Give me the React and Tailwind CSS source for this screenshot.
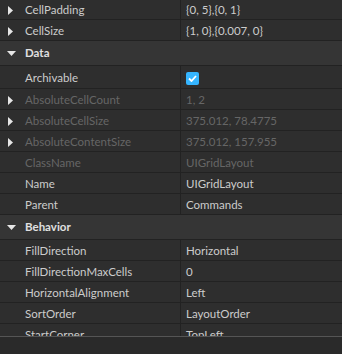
import React from 'react';

const Arrow = ({ open }) =>
  open ? (
    <svg width="9" height="5" viewBox="0 0 9 5" className="fill-[#e6e6e6]">
      <path d="M0 0H9L4.5 5Z" />
    </svg>
  ) : (
    <svg width="5" height="9" viewBox="0 0 5 9" className="fill-[#e6e6e6]">
      <path d="M0 0L5 4.5L0 9Z" />
    </svg>
  );

const Check = () => (
  <div className="w-[13px] h-[13px] rounded-[2px] bg-[#35b5ff] flex items-center justify-center">
    <svg width="9" height="7" viewBox="0 0 9 7" fill="none" stroke="white" strokeWidth="1.8">
      <path d="M1 3.5L3.5 6L8 1" />
    </svg>
  </div>
);

const Row = ({ name, value, arrow, disabled, check, h = 'h-[20px]' }) => (
  <div className={`flex ${h} border-b border-[#222222] box-content`}>
    <div className="w-[180px] flex items-center shrink-0 pt-[2px]">
      <div className="w-[25px] flex items-center pl-[8px]">{arrow ? <Arrow /> : null}</div>
      <span className={disabled ? 'text-[#666666]' : 'text-[#cccccc]'}>{name}</span>
    </div>
    <div className="border-l border-[#222222] flex items-center pl-[5px] flex-1 pt-[2px]">
      {check ? <Check /> : <span className={disabled ? 'text-[#666666]' : 'text-[#cccccc]'}>{value}</span>}
    </div>
  </div>
);

const Header = ({ title }) => (
  <div className="flex items-center h-[24px] bg-[#353535] border-b border-[#222222] box-content">
    <div className="w-[25px] flex items-center pl-[7px]"><Arrow open /></div>
    <span className="font-bold text-[#e0e0e0]">{title}</span>
  </div>
);

export default function App() {
  return (
    <div className="w-[342px] h-[354px] bg-[#2a2a2a] overflow-hidden flex flex-col text-[11.5px] font-['Lato',sans-serif]">
      <div className="h-[336px] bg-[#2e2e2e] overflow-hidden border-b border-[#555555] box-content">
        <div className="-mt-px">
          <Row name="CellPadding" value="{0, 5},{0, 1}" arrow />
          <Row name="CellSize" value="{1, 0},{0.007, 0}" arrow />
          <Header title="Data" />
          <Row name="Archivable" check h="h-[22px]" />
          <Row name="AbsoluteCellCount" value="1, 2" arrow disabled />
          <Row name="AbsoluteCellSize" value="375.012, 78.4775" arrow disabled />
          <Row name="AbsoluteContentSize" value="375.012, 157.955" arrow disabled />
          <Row name="ClassName" value="UIGridLayout" disabled />
          <Row name="Name" value="UIGridLayout" />
          <Row name="Parent" value="Commands" />
          <Header title="Behavior" />
          <Row name="FillDirection" value="Horizontal" />
          <Row name="FillDirectionMaxCells" value="0" />
          <Row name="HorizontalAlignment" value="Left" />
          <Row name="SortOrder" value="LayoutOrder" />
          <Row name="StartCorner" value="TopLeft" />
        </div>
      </div>
    </div>
  );
}
